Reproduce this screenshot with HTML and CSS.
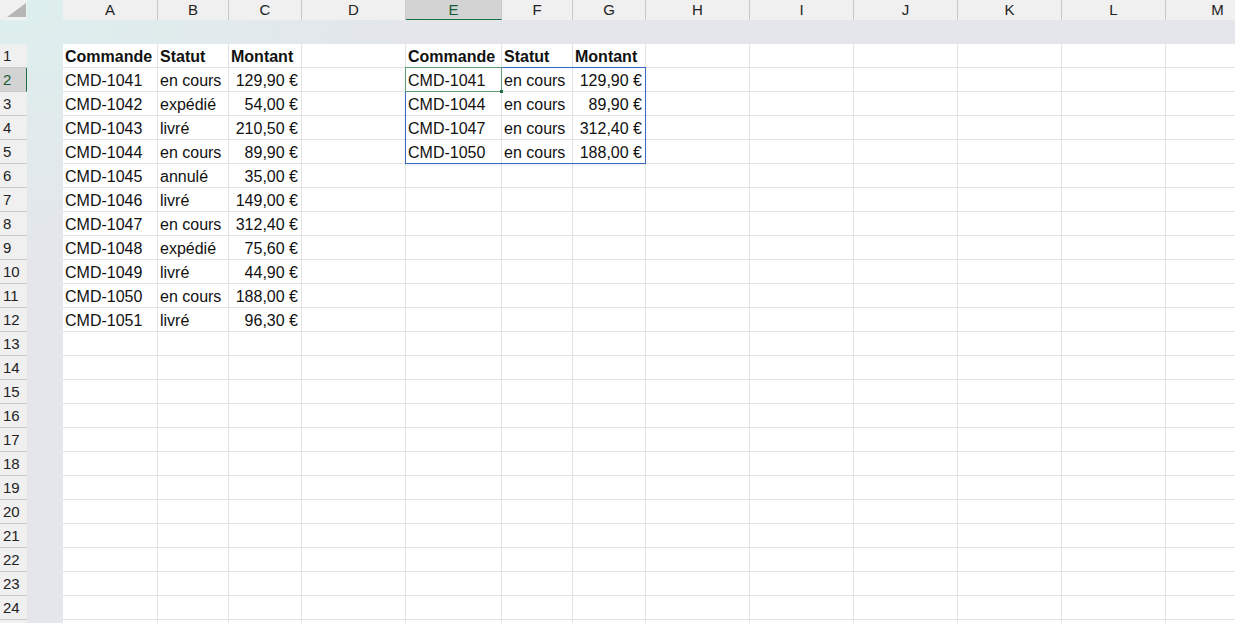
FILE: index.html
```html
<!DOCTYPE html>
<html lang="fr">
<head>
  <meta charset="UTF-8">
  <meta name="viewport" content="width=device-width, initial-scale=1.0">
  <title>Commandes</title>
  <link rel="stylesheet" href="styles.css">
</head>
<body>
  <div class="sheet">
    <div class="corner"><span class="corner-tri"></span></div>
    <div class="col-heads">
      <div class="ch w-a">A</div>
      <div class="ch w-b">B</div>
      <div class="ch w-c">C</div>
      <div class="ch w-d">D</div>
      <div class="ch w-e active">E</div>
      <div class="ch w-f">F</div>
      <div class="ch w-g">G</div>
      <div class="ch w-d">H</div>
      <div class="ch w-d">I</div>
      <div class="ch w-d">J</div>
      <div class="ch w-d">K</div>
      <div class="ch w-d">L</div>
      <div class="ch w-d">M</div>
    </div>
    <div class="row-heads">
      <div class="rh">1</div>
      <div class="rh active">2</div>
      <div class="rh">3</div>
      <div class="rh">4</div>
      <div class="rh">5</div>
      <div class="rh">6</div>
      <div class="rh">7</div>
      <div class="rh">8</div>
      <div class="rh">9</div>
      <div class="rh">10</div>
      <div class="rh">11</div>
      <div class="rh">12</div>
      <div class="rh">13</div>
      <div class="rh">14</div>
      <div class="rh">15</div>
      <div class="rh">16</div>
      <div class="rh">17</div>
      <div class="rh">18</div>
      <div class="rh">19</div>
      <div class="rh">20</div>
      <div class="rh">21</div>
      <div class="rh">22</div>
      <div class="rh">23</div>
      <div class="rh">24</div>
      <div class="rh"></div>
    </div>
    <div class="cells">
      <table class="grid">
        <colgroup>
          <col class="w-a"><col class="w-b"><col class="w-c"><col class="w-d"><col class="w-e"><col class="w-f"><col class="w-g">
          <col class="w-d"><col class="w-d"><col class="w-d"><col class="w-d"><col class="w-d"><col class="w-d">
        </colgroup>
        <tr class="head"><td>Commande</td><td>Statut</td><td>Montant</td><td></td><td>Commande</td><td>Statut</td><td>Montant</td><td></td><td></td><td></td><td></td><td></td><td></td></tr>
        <tr><td>CMD-1041</td><td>en cours</td><td class="num">129,90 €</td><td></td><td>CMD-1041</td><td>en cours</td><td class="num">129,90 €</td><td></td><td></td><td></td><td></td><td></td><td></td></tr>
        <tr><td>CMD-1042</td><td>expédié</td><td class="num">54,00 €</td><td></td><td>CMD-1044</td><td>en cours</td><td class="num">89,90 €</td><td></td><td></td><td></td><td></td><td></td><td></td></tr>
        <tr><td>CMD-1043</td><td>livré</td><td class="num">210,50 €</td><td></td><td>CMD-1047</td><td>en cours</td><td class="num">312,40 €</td><td></td><td></td><td></td><td></td><td></td><td></td></tr>
        <tr><td>CMD-1044</td><td>en cours</td><td class="num">89,90 €</td><td></td><td>CMD-1050</td><td>en cours</td><td class="num">188,00 €</td><td></td><td></td><td></td><td></td><td></td><td></td></tr>
        <tr><td>CMD-1045</td><td>annulé</td><td class="num">35,00 €</td><td></td><td></td><td></td><td></td><td></td><td></td><td></td><td></td><td></td><td></td></tr>
        <tr><td>CMD-1046</td><td>livré</td><td class="num">149,00 €</td><td></td><td></td><td></td><td></td><td></td><td></td><td></td><td></td><td></td><td></td></tr>
        <tr><td>CMD-1047</td><td>en cours</td><td class="num">312,40 €</td><td></td><td></td><td></td><td></td><td></td><td></td><td></td><td></td><td></td><td></td></tr>
        <tr><td>CMD-1048</td><td>expédié</td><td class="num">75,60 €</td><td></td><td></td><td></td><td></td><td></td><td></td><td></td><td></td><td></td><td></td></tr>
        <tr><td>CMD-1049</td><td>livré</td><td class="num">44,90 €</td><td></td><td></td><td></td><td></td><td></td><td></td><td></td><td></td><td></td><td></td></tr>
        <tr><td>CMD-1050</td><td>en cours</td><td class="num">188,00 €</td><td></td><td></td><td></td><td></td><td></td><td></td><td></td><td></td><td></td><td></td></tr>
        <tr><td>CMD-1051</td><td>livré</td><td class="num">96,30 €</td><td></td><td></td><td></td><td></td><td></td><td></td><td></td><td></td><td></td><td></td></tr>
        <tr><td></td><td></td><td></td><td></td><td></td><td></td><td></td><td></td><td></td><td></td><td></td><td></td><td></td></tr>
        <tr><td></td><td></td><td></td><td></td><td></td><td></td><td></td><td></td><td></td><td></td><td></td><td></td><td></td></tr>
        <tr><td></td><td></td><td></td><td></td><td></td><td></td><td></td><td></td><td></td><td></td><td></td><td></td><td></td></tr>
        <tr><td></td><td></td><td></td><td></td><td></td><td></td><td></td><td></td><td></td><td></td><td></td><td></td><td></td></tr>
        <tr><td></td><td></td><td></td><td></td><td></td><td></td><td></td><td></td><td></td><td></td><td></td><td></td><td></td></tr>
        <tr><td></td><td></td><td></td><td></td><td></td><td></td><td></td><td></td><td></td><td></td><td></td><td></td><td></td></tr>
        <tr><td></td><td></td><td></td><td></td><td></td><td></td><td></td><td></td><td></td><td></td><td></td><td></td><td></td></tr>
        <tr><td></td><td></td><td></td><td></td><td></td><td></td><td></td><td></td><td></td><td></td><td></td><td></td><td></td></tr>
        <tr><td></td><td></td><td></td><td></td><td></td><td></td><td></td><td></td><td></td><td></td><td></td><td></td><td></td></tr>
        <tr><td></td><td></td><td></td><td></td><td></td><td></td><td></td><td></td><td></td><td></td><td></td><td></td><td></td></tr>
        <tr><td></td><td></td><td></td><td></td><td></td><td></td><td></td><td></td><td></td><td></td><td></td><td></td><td></td></tr>
        <tr><td></td><td></td><td></td><td></td><td></td><td></td><td></td><td></td><td></td><td></td><td></td><td></td><td></td></tr>
        <tr><td></td><td></td><td></td><td></td><td></td><td></td><td></td><td></td><td></td><td></td><td></td><td></td><td></td></tr>
      </table>
      <!-- spill range E2:G5 and active cell E2 -->
      <div class="spill"></div>
      <div class="active-cell"><span class="fill-handle"></span></div>
    </div>
  </div>
</body>
</html>
```

FILE: styles.css
```css
*{
  margin: 0;
  padding: 0;
  box-sizing: border-box;
}
html, body{
  width: 100%;
  height: 100%;
  overflow: hidden;
  background: #fff;
}
body{
  font-family: "Liberation Sans", Arial, sans-serif;
  color: #111;
}
.sheet{
  display: grid;
  grid-template-columns: 27px 36px 1fr;
  grid-template-rows: 20px 24px 1fr;
  width: 1235px;
  height: 623px;
  overflow: hidden;
  background: radial-gradient(ellipse 420px 260px at 0 0, #dcf0ee 0, #e0ebec 40%, #e4e6eb 100%);
}
.corner{
  grid-column: 1;
  grid-row: 1;
  background: #f0f0f0;
  position: relative;
}
.corner-tri{
  position: absolute;
  right: 1px;
  bottom: 3px;
  width: 0;
  height: 0;
  border-left: 19px solid transparent;
  border-bottom: 14px solid #b6b6b6;
}
.col-heads{
  grid-column: 3;
  grid-row: 1;
  display: flex;
  background: #f0f0f0;
}
.ch{
  flex: none;
  height: 20px;
  line-height: 19px;
  text-align: center;
  font-size: 15px;
  color: #222;
  border-right: 1px solid #c9c9c9;
}
.ch.active{
  background: #d3d3d3;
  color: #145c34;
  border-bottom: 1px solid #1e7145;
}
.w-a{ width: 95px; }
.w-b{ width: 71px; }
.w-c{ width: 73px; }
.w-d{ width: 104px; }
.w-e{ width: 96px; }
.w-f{ width: 71px; }
.w-g{ width: 73px; }

.row-heads{
  grid-column: 1;
  grid-row: 3;
  display: flex;
  flex-direction: column;
}
.rh{
  flex: none;
  height: 24px;
  line-height: 24px;
  padding-left: 3px;
  font-size: 15px;
  color: #222;
  background: #f0f0f0;
  border-bottom: 1px solid #c9c9c9;
}
.rh.active{
  background: #d3d3d3;
  color: #145c34;
  border-right: 1px solid #1e7145;
}

.cells{
  grid-column: 3;
  grid-row: 3;
  position: relative;
  background: #fff;
}
.grid{
  table-layout: fixed;
  border-collapse: separate;
  border-spacing: 0;
  width: 1173px;
}
.grid td{
  height: 24px;
  padding: 2px 3px 0 2px;
  font-size: 16px;
  line-height: 21px;
  white-space: nowrap;
  overflow: hidden;
  border-right: 1px solid #e3e3e3;
  border-bottom: 1px solid #e3e3e3;
}
.grid .head td{
  font-weight: bold;
}
.grid td.num{
  text-align: right;
}
.spill{
  position: absolute;
  left: 342px;
  top: 23px;
  width: 241px;
  height: 97px;
  border: 1px solid #3a66c4;
  box-shadow: 0 1px 3px rgba(0,0,0,.08);
  pointer-events: none;
}
.active-cell{
  position: absolute;
  left: 342px;
  top: 23px;
  width: 97px;
  height: 25px;
  border: 1px solid #5f9a74;
  pointer-events: none;
}
.fill-handle{
  position: absolute;
  right: -2px;
  bottom: -2px;
  width: 3px;
  height: 3px;
  background: #1e7145;
}
```
